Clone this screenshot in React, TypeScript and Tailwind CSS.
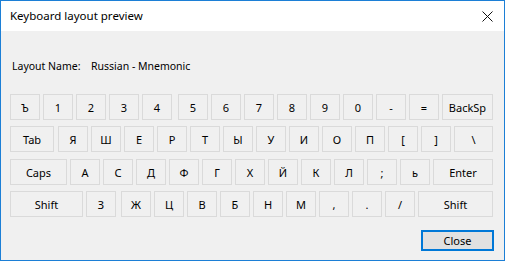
type Key = {
  label: string
  w?: string
  ml?: string
}

const rows: Key[][] = [
  [
    { label: 'Ъ' },
    { label: '1' },
    { label: '2' },
    { label: '3' },
    { label: '4' },
    { label: '5', ml: 'ml-[3px]' },
    { label: '6' },
    { label: '7' },
    { label: '8' },
    { label: '9' },
    { label: '0' },
    { label: '-' },
    { label: '=' },
    { label: 'BackSp', w: 'w-[51px]' }
  ],
  [
    { label: 'Tab', w: 'w-[44px]' },
    { label: 'Я', ml: 'ml-[1px]' },
    { label: 'Ш' },
    { label: 'Е' },
    { label: 'Р' },
    { label: 'Т' },
    { label: 'Ы' },
    { label: 'У' },
    { label: 'И' },
    { label: 'О' },
    { label: 'П' },
    { label: '[' },
    { label: ']' },
    { label: '\\', w: 'w-[39px]' }
  ],
  [
    { label: 'Caps', w: 'w-[57px]' },
    { label: 'А' },
    { label: 'С' },
    { label: 'Д' },
    { label: 'Ф' },
    { label: 'Г' },
    { label: 'Х' },
    { label: 'Й' },
    { label: 'К' },
    { label: 'Л' },
    { label: ';' },
    { label: 'ь' },
    { label: 'Enter', w: 'w-[60px]' }
  ],
  [
    { label: 'Shift', w: 'w-[73px]' },
    { label: 'З' },
    { label: 'Ж', ml: 'ml-[2px]' },
    { label: 'Ц' },
    { label: 'В' },
    { label: 'Б' },
    { label: 'Н' },
    { label: 'М' },
    { label: ',' },
    { label: '.' },
    { label: '/' },
    { label: 'Shift', w: 'w-[75px]' }
  ]
]

const rowMargins = ['mt-0', 'mt-[6px]', 'mt-[7px]', 'mt-[6px]']

function KeyCap({ k }: { k: Key }) {
  return (
    <div
      className={`${k.w ?? 'w-[30px]'} ${k.ml ?? ''} h-[26px] shrink-0 border border-[#dadada] flex items-center justify-center`}
    >
      {k.label}
    </div>
  )
}

export default function App() {
  return (
    <div className="w-[505px] h-[261px] border border-[#1c7fd6] bg-[#f0f0f0] flex flex-col text-[11px] text-black font-['Noto_Sans',sans-serif] leading-none">
      <div className="h-[30px] bg-white flex items-center justify-between pl-[9px] pr-[10px]">
        <span className="text-[11.5px]">Keyboard layout preview</span>
        <svg width="11" height="11" viewBox="0 0 11 11" className="mr-[1px]">
          <path d="M0.5 0.5 L10.5 10.5 M10.5 0.5 L0.5 10.5" stroke="#111" strokeWidth="1" fill="none" />
        </svg>
      </div>

      <div className="flex flex-col px-[9px]">
        <div className="mt-[27px] h-[16px] flex items-center whitespace-nowrap text-[10.5px]">
          <span className="ml-[2px] w-[79px] shrink-0">Layout Name:</span>
          <span>Russian - Mnemonic</span>
        </div>

        <div className="mt-[20px] flex flex-col">
          {rows.map((row, index) => (
            <div className={`flex gap-[3px] ${rowMargins[index]}`} key={index}>
              {row.map((k, i) => (
                <KeyCap k={k} key={i} />
              ))}
            </div>
          ))}
        </div>

        <div className="mt-[13px] flex justify-end pr-[1px]">
          <button className="w-[73px] h-[21px] border-2 border-[#0078d7] bg-[#e1e1e1] flex items-center justify-center">
            Close
          </button>
        </div>
      </div>
    </div>
  )
}
